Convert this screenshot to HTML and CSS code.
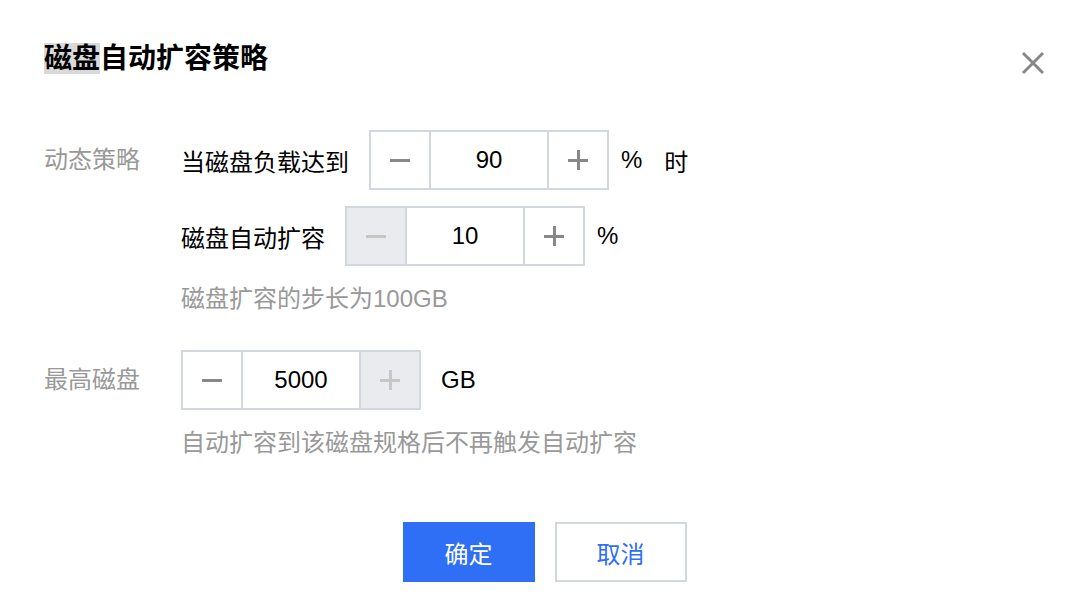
FILE: index.html
```html
<!DOCTYPE html>
<html>
<head>
    <title>磁盘自动扩容策略</title>
    <link rel="stylesheet" href="styles.css">
</head>
<body>
    <div class="dialog">
        <div class="dialog-head">
            <h1 class="dialog-title"><span class="selected">磁盘</span>自动扩容策略</h1>
            <button class="close-btn" aria-label="关闭">
                <svg width="24" height="24" viewBox="0 0 24 24">
                    <path d="M2 2 L22 22 M22 2 L2 22" stroke="#888" stroke-width="3" fill="none"/>
                </svg>
            </button>
        </div>

        <div class="form">
            <div class="form-row">
                <div class="form-label">动态策略</div>
                <div class="form-ctrl">
                    <div class="line">
                        <span>当磁盘负载达到</span>
                        <div class="stepper">
                            <button class="step minus"><i class="bar-h"></i></button>
                            <div class="step-value">90</div>
                            <button class="step plus"><i class="bar-h"></i><i class="bar-v"></i></button>
                        </div>
                        <span class="unit">%</span>
                        <span class="suffix">时</span>
                    </div>
                    <div class="line">
                        <span>磁盘自动扩容</span>
                        <div class="stepper">
                            <button class="step minus disabled"><i class="bar-h"></i></button>
                            <div class="step-value">10</div>
                            <button class="step plus"><i class="bar-h"></i><i class="bar-v"></i></button>
                        </div>
                        <span class="unit">%</span>
                    </div>
                    <div class="hint">磁盘扩容的步长为100GB</div>
                </div>
            </div>

            <div class="form-row row-max">
                <div class="form-label">最高磁盘</div>
                <div class="form-ctrl">
                    <div class="line line-first">
                        <div class="stepper">
                            <button class="step minus"><i class="bar-h"></i></button>
                            <div class="step-value">5000</div>
                            <button class="step plus disabled"><i class="bar-h"></i><i class="bar-v"></i></button>
                        </div>
                        <span class="unit unit-gb">GB</span>
                    </div>
                    <div class="hint">自动扩容到该磁盘规格后不再触发自动扩容</div>
                </div>
            </div>
        </div>

        <div class="dialog-foot">
            <button class="btn btn-primary">确定</button>
            <button class="btn btn-default">取消</button>
        </div>
    </div>
</body>
</html>
```

FILE: styles.css
```css
body {
    margin: 0;
    background: #fff;
    font-family: "Liberation Sans", "Noto Sans CJK SC", sans-serif;
    color: #000;
}

.dialog {
    width: 1082px;
    height: 606px;
    box-sizing: border-box;
    padding: 40px 37px 0 44px;
}

.dialog-head {
    display: flex;
    justify-content: space-between;
    align-items: flex-start;
}

.dialog-title {
    margin: 0;
    font-size: 28px;
    line-height: 38px;
    font-weight: bold;
}

.selected {
    background: #d9d9d9;
}

.close-btn {
    border: none;
    background: none;
    padding: 0;
    margin-top: 11px;
    width: 24px;
    height: 24px;
    cursor: pointer;
}

.close-btn svg {
    display: block;
}

.form {
    margin-top: 52px;
}

.form-row {
    display: flex;
}

.row-max {
    margin-top: 34px;
}

.form-label {
    width: 137px;
    flex-shrink: 0;
    font-size: 24px;
    line-height: 60px;
    color: #999;
}

.form-ctrl {
    display: flex;
    flex-direction: column;
    gap: 16px;
}

.line {
    display: flex;
    align-items: center;
    font-size: 24px;
    height: 60px;
}

.stepper {
    display: flex;
    height: 60px;
    box-sizing: border-box;
    border: 2px solid #d3d7de;
    margin-left: 20px;
}

.line-first .stepper {
    margin-left: 0;
}

.step {
    width: 60px;
    border: none;
    padding: 0;
    background: #fff;
    position: relative;
    cursor: pointer;
}

.step.minus {
    border-right: 2px solid #d3d7de;
}

.step.plus {
    border-left: 2px solid #d3d7de;
}

.step.disabled {
    background: #e9ebef;
    cursor: not-allowed;
}

.bar-h,
.bar-v {
    position: absolute;
    left: 50%;
    top: 50%;
    background: #888;
}

.bar-h {
    width: 20px;
    height: 3px;
    margin: -1px 0 0 -10px;
}

.bar-v {
    width: 3px;
    height: 20px;
    margin: -10px 0 0 -1px;
}

.step.disabled .bar-h,
.step.disabled .bar-v {
    background: #c6c6c6;
}

.step-value {
    width: 116px;
    display: flex;
    align-items: center;
    justify-content: center;
    font-size: 24px;
}

.unit {
    margin-left: 12px;
}

.unit-gb {
    margin-left: 20px;
}

.suffix {
    margin-left: 22px;
}

.hint {
    font-size: 24px;
    line-height: 34px;
    color: #999;
}

.dialog-foot {
    display: flex;
    justify-content: center;
    gap: 20px;
    margin-top: 62px;
}

.btn {
    width: 132px;
    height: 60px;
    box-sizing: border-box;
    font-size: 24px;
    font-family: "Liberation Sans", "Noto Sans CJK SC", sans-serif;
    cursor: pointer;
}

.btn-primary {
    background: #2e6ff6;
    border: none;
    color: #fff;
}

.btn-default {
    background: #fff;
    border: 2px solid #d3d7de;
    color: #2e6ff6;
}
```
